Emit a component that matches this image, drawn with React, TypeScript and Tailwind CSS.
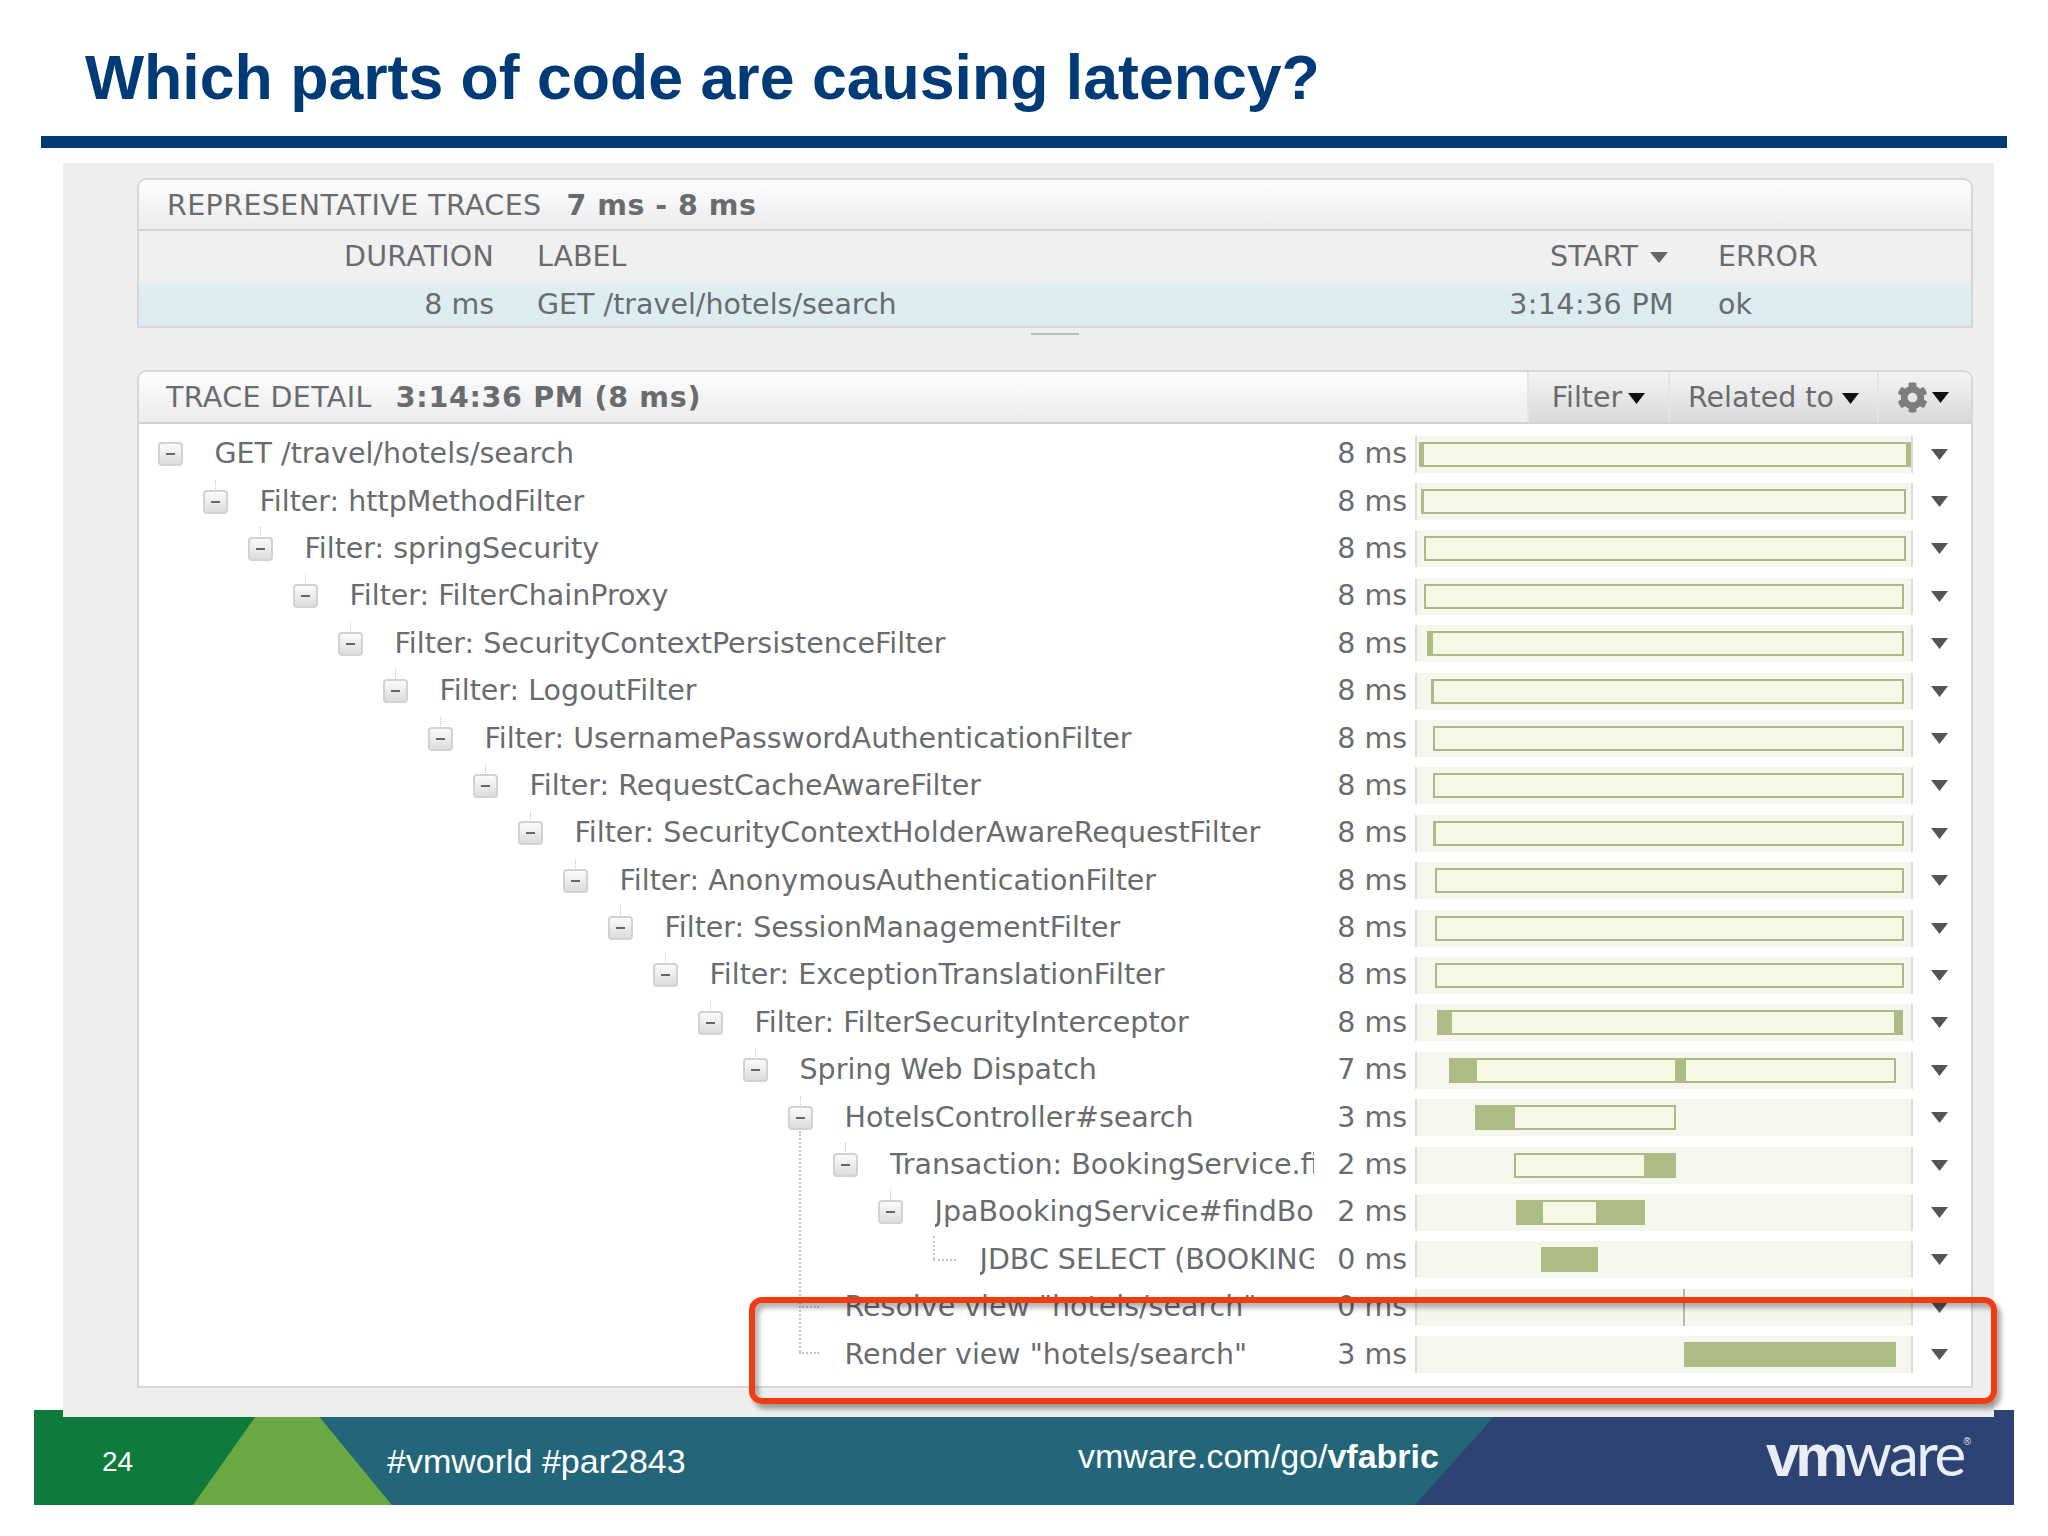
import React from 'react';
import { FaCog } from 'react-icons/fa';

const TL = 1415; // page x of the timeline's left edge

type Seg = [number, number];
type Trace = {
  name: string;
  level: number;
  ms: string;
  bar?: Seg;
  dark?: Seg[];
  tick?: number;
  leaf?: boolean;
  clip?: boolean;
};

const traces: Trace[] = [
  { name: 'GET /travel/hotels/search', level: 0, ms: '8 ms', bar: [1419, 1911], dark: [[1419, 1424], [1906, 1911]] },
  { name: 'Filter: httpMethodFilter', level: 1, ms: '8 ms', bar: [1421, 1906], dark: [[1421, 1424]] },
  { name: 'Filter: springSecurity', level: 2, ms: '8 ms', bar: [1424, 1906] },
  { name: 'Filter: FilterChainProxy', level: 3, ms: '8 ms', bar: [1424, 1904] },
  { name: 'Filter: SecurityContextPersistenceFilter', level: 4, ms: '8 ms', bar: [1427, 1904], dark: [[1427, 1433]] },
  { name: 'Filter: LogoutFilter', level: 5, ms: '8 ms', bar: [1431, 1904], dark: [[1431, 1434]] },
  { name: 'Filter: UsernamePasswordAuthenticationFilter', level: 6, ms: '8 ms', bar: [1433, 1904] },
  { name: 'Filter: RequestCacheAwareFilter', level: 7, ms: '8 ms', bar: [1433, 1904] },
  { name: 'Filter: SecurityContextHolderAwareRequestFilter', level: 8, ms: '8 ms', bar: [1433, 1904], dark: [[1433, 1436]] },
  { name: 'Filter: AnonymousAuthenticationFilter', level: 9, ms: '8 ms', bar: [1435, 1904] },
  { name: 'Filter: SessionManagementFilter', level: 10, ms: '8 ms', bar: [1435, 1904] },
  { name: 'Filter: ExceptionTranslationFilter', level: 11, ms: '8 ms', bar: [1435, 1904], dark: [[1435, 1437]] },
  { name: 'Filter: FilterSecurityInterceptor', level: 12, ms: '8 ms', bar: [1437, 1903], dark: [[1437, 1452], [1894, 1903]] },
  { name: 'Spring Web Dispatch', level: 13, ms: '7 ms', bar: [1449, 1896], dark: [[1449, 1477], [1675, 1686]] },
  { name: 'HotelsController#search', level: 14, ms: '3 ms', bar: [1475, 1676], dark: [[1475, 1515]] },
  { name: 'Transaction: BookingService.fi', level: 15, ms: '2 ms', bar: [1514, 1676], dark: [[1644, 1676]], clip: true },
  { name: 'JpaBookingService#findBoo', level: 16, ms: '2 ms', bar: [1516, 1645], dark: [[1516, 1543], [1596, 1645]], clip: true },
  { name: 'JDBC SELECT (BOOKING', level: 17, ms: '0 ms', bar: [1541, 1598], dark: [[1541, 1598]], leaf: true, clip: true },
  { name: 'Resolve view "hotels/search"', level: 14, ms: '0 ms', tick: 1683, leaf: true },
  { name: 'Render view "hotels/search"', level: 14, ms: '3 ms', bar: [1684, 1896], dark: [[1684, 1896]], leaf: true },
];

function Tri({ w = 17, h = 11, color = '#555' }: { w?: number; h?: number; color?: string }) {
  return (
    <svg width={w} height={h} viewBox="0 0 10 7" className="shrink-0" preserveAspectRatio="none">
      <polygon points="0,0 10,0 5,7" fill={color} />
    </svg>
  );
}

function Toggle({ first }: { first: boolean }) {
  return (
    <div className="relative w-[25px] h-[24px] shrink-0 rounded-[4px] border-2 border-[#d2d2d2] bg-gradient-to-b from-[#fbfbfb] to-[#dcdcdc] flex items-center justify-center">
      {!first && <div className="absolute -top-[12px] left-[10px] h-[9px] border-l border-dotted border-[#c4c4c4]" />}
      <div className="w-[9px] h-[2px] bg-[#666]" />
    </div>
  );
}

function Timeline({ t }: { t: Trace }) {
  return (
    <div className="relative ml-[8px] w-[498px] h-[37px] shrink-0 bg-[#f5f7ee] border-x-2 border-[#dcdcd8]">
      {t.tick && <div className="absolute top-0 bottom-0 w-[2px] bg-[#b8b8b0]" style={{ left: t.tick - TL - 2 }} />}
      {t.bar && (
        <div
          className="absolute top-[6px] h-[25px] border-2 border-[#abba85] bg-[#f4f8e4]"
          style={{ left: t.bar[0] - TL - 2, width: t.bar[1] - t.bar[0] }}
        />
      )}
      {t.dark?.map((d) => (
        <div
          key={d[0]}
          className="absolute top-[6px] h-[25px] bg-[#adbc85]"
          style={{ left: d[0] - TL - 2, width: d[1] - d[0] }}
        />
      ))}
    </div>
  );
}

function TraceRow({ t, index }: { t: Trace; index: number }) {
  return (
    <div className="flex items-center h-[47.4px]">
      <div
        className="w-[1175px] shrink-0 flex items-center whitespace-nowrap"
        style={{ paddingLeft: 19 + 45 * t.level }}
      >
        {t.leaf ? <div className="w-[25px] shrink-0" /> : <Toggle first={index === 0} />}
        <span className={`ml-[31.5px] ${t.clip ? 'min-w-0 overflow-hidden' : ''}`}>{t.name}</span>
      </div>
      <div className="w-[93px] shrink-0 text-right whitespace-nowrap">{t.ms}</div>
      <Timeline t={t} />
      <div className="ml-[18px]">
        <Tri />
      </div>
    </div>
  );
}

function RepresentativeTraces() {
  return (
    <div className="rounded-t-[10px] border-2 border-[#d6d6d6] bg-[#f0f0f1]">
      <div className="h-[51px] flex items-center pl-[28px] pt-[2px] rounded-t-[8px] border-b-2 border-[#d2d2d2] bg-gradient-to-b from-[#fdfdfd] to-[#ececec]">
        <span className="tracking-[0.4px]">REPRESENTATIVE TRACES</span>
        <span className="ml-[25px] font-bold tracking-[0.5px]">7 ms - 8 ms</span>
      </div>
      <div className="flex items-center h-[50px] pt-[2px]">
        <div className="w-[355px] shrink-0 text-right tracking-[0.2px]">DURATION</div>
        <div className="flex-1 pl-[43px]">LABEL</div>
        <div className="flex items-center justify-end gap-[12px] pr-[6px]">
          <span>START</span>
          <Tri w={18} h={11} color="#666" />
        </div>
        <div className="w-[297px] shrink-0 pl-[44px]">ERROR</div>
      </div>
      <div className="flex items-center h-[45px] pt-[2px] bg-gradient-to-b from-[#e4eef1] to-[#dcecf1] to-30%">
        <div className="w-[355px] shrink-0 text-right">8 ms</div>
        <div className="flex-1 pl-[43px]">GET /travel/hotels/search</div>
        <div className="tracking-[0.4px]">3:14:36 PM</div>
        <div className="w-[297px] shrink-0 pl-[44px]">ok</div>
      </div>
    </div>
  );
}

function TraceDetail() {
  const btn = 'h-full flex items-center justify-center border-l-2 border-[#e4e4e4] bg-gradient-to-b from-[#f4f4f4] to-[#d9d9d9]';
  return (
    <div className="rounded-t-[10px] border-2 border-[#d6d6d6] bg-white h-[1018px]">
      <div className="h-[52px] flex items-center justify-between pl-[27px] rounded-t-[8px] border-b-2 border-[#d2d2d2] bg-gradient-to-b from-[#fdfdfd] to-[#ececec]">
        <div className="pt-[2px]">
          <span className="tracking-[0.4px]">TRACE DETAIL</span>
          <span className="ml-[24px] font-bold tracking-[0.7px]">3:14:36 PM (8 ms)</span>
        </div>
        <div className="flex h-full">
          <div className={`${btn} w-[141px] gap-[6px] pt-[2px]`}>
            <span>Filter</span>
            <Tri color="#111" />
          </div>
          <div className={`${btn} w-[209px] gap-[8px] pt-[2px]`}>
            <span>Related to</span>
            <Tri color="#111" />
          </div>
          <div className={`${btn} w-[94px] gap-[4px] pr-[4px] rounded-tr-[8px]`}>
            <FaCog className="w-[31px] h-[31px] text-[#7d7d7d]" />
            <Tri color="#111" />
          </div>
        </div>
      </div>
      <div className="relative pt-[6.5px]">
        {traces.map((t, i) => (
          <TraceRow key={t.name} t={t} index={i} />
        ))}
        {/* tree guides of the nodes without a toggle */}
        <div className="absolute left-[660px] top-[707px] h-[221px] border-l-2 border-dotted border-[#c4c4c4]" />
        <div className="absolute left-[660px] top-[882px] w-[20px] border-t-2 border-dotted border-[#c4c4c4]" />
        <div className="absolute left-[660px] top-[928px] w-[20px] border-t-2 border-dotted border-[#c4c4c4]" />
        <div className="absolute left-[794px] top-[812px] h-[23px] border-l-2 border-dotted border-[#c4c4c4]" />
        <div className="absolute left-[794px] top-[835px] w-[23px] border-t-2 border-dotted border-[#c4c4c4]" />
      </div>
    </div>
  );
}

function Footer() {
  return (
    <div className="relative ml-[34px] mt-[-7px] w-[1980px] h-[95px] bg-[#0e7b3d] text-white [font-family:'Liberation_Sans',sans-serif]">
      <svg className="absolute inset-0" width="1980" height="95" viewBox="0 0 1980 95">
        <polygon points="226,0 280,0 358,95 159,95" fill="#6aa843" />
        <polygon points="280,0 1466,0 1381,95 358,95" fill="#23667a" />
        <polygon points="1466,0 1980,0 1980,95 1381,95" fill="#2d4373" />
      </svg>
      <div className="relative h-full flex items-center">
        <div className="w-[353px] pl-[68px] text-[28px] pt-[8px]">24</div>
        <div className="w-[691px] text-[34px] pt-[8px]">#vmworld #par2843</div>
        <div className="w-[688px] text-[34px] pb-[2px]">
          vmware.com/go/<span className="font-bold">vfabric</span>
        </div>
        <div className="flex items-baseline leading-none text-[#e9edf4] pb-[7px]">
          <span className="text-[60px] font-bold tracking-[-4px]">vm</span>
          <span className="text-[60px] [font-family:'Lato',sans-serif] tracking-[-2.5px]">ware</span>
          <span className="text-[10px] self-start mt-[14px]">®</span>
        </div>
      </div>
    </div>
  );
}

export default function App() {
  return (
    <div className="relative w-[2048px] h-[1536px] overflow-hidden bg-white">
      <h1 className="h-[136px] pl-[85px] pt-[41px] text-[62.6px] leading-[72px] font-bold text-[#003b77] [font-family:'Liberation_Sans',sans-serif]">
        Which parts of code are causing latency?
      </h1>
      <div className="ml-[41px] w-[1966px] h-[12px] bg-[#003b77]" />

      <div className="relative z-10 ml-[63px] mt-[15px] w-[1931px] h-[1254px] pt-[15px] pl-[74px] bg-[#eeeeef] text-[28.5px] leading-[34px] text-[#696c6e] [font-family:'DejaVu_Sans',sans-serif]">
        <div className="w-[1836px]">
          <RepresentativeTraces />
          <div className="h-[42px] flex justify-center">
            <div className="mt-[5px] w-[48px] h-[2px] bg-[#bdbdbd]" />
          </div>
          <TraceDetail />
        </div>
      </div>

      <Footer />

      {/* red highlight drawn over the slide */}
      <div className="absolute z-20 left-[749px] top-[1297px] w-[1248px] h-[107px] rounded-[13px] border-[6px] border-[#f23c10] shadow-[4px_5px_5px_rgba(0,0,0,0.35),inset_4px_5px_5px_rgba(0,0,0,0.3)]" />
    </div>
  );
}
